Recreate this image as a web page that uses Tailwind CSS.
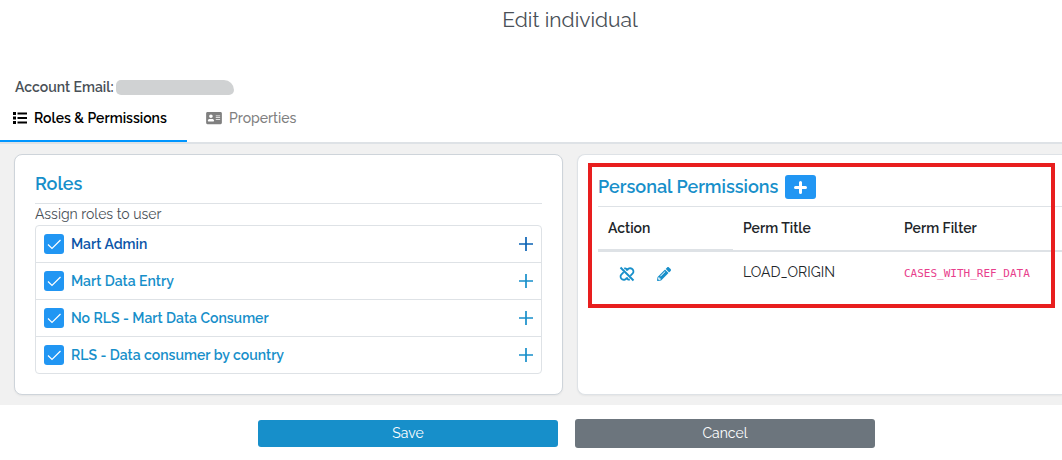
<!DOCTYPE html>
<html lang="en">
<head>
    <meta charset="UTF-8">
    <meta name="viewport" content="width=device-width, initial-scale=1.0">
    <title>Edit individual</title>
    <script src="https://cdn.jsdelivr.net/npm/@tailwindcss/browser@4"></script>
</head>
<body class="bg-white font-['Raleway','Lato',sans-serif] text-sm leading-5 text-[#495057]">
    <header class="h-[77px] pt-[6px] pl-[78px] text-center">
        <h1 class="text-[21px] leading-7 font-normal">Edit individual</h1>
    </header>

    <div class="flex items-center px-[15px] h-5 font-semibold">
        <span>Account Email:</span>
        <span class="ml-[2px] h-[15px] w-[118px] rounded-l-lg rounded-tr-2xl rounded-br-lg bg-[#d0d2d3]"></span>
    </div>

    <nav class="flex h-[47px] border-b-2 border-[#dee2e6]">
        <a href="#roles" class="flex w-[187px] items-center gap-[7px] border-b-2 border-[#0096ff] pl-[13px] pb-px font-semibold text-black">
            <svg class="h-[14px] w-[14px]" viewBox="0 0 14 14" fill="currentColor"><path d="M0 1h3v3H0zM0 5.500h3v3H0zM0 10h3v3H0zM4.500 1.500H14v2H4.500zM4.500 6H14v2H4.500zM4.500 10.500H14v2H4.500z"/></svg>
            Roles &amp; Permissions
        </a>
        <a href="#properties" class="flex items-center gap-[7px] px-[19px] pb-[3px] font-medium text-[#808080]">
            <svg class="h-[14px] w-4" viewBox="0 0 576 512" fill="currentColor"><path d="M528 32H48C21.500 32 0 53.500 0 80v352c0 26.500 21.500 48 48 48h480c26.500 0 48-21.500 48-48V80c0-26.500-21.500-48-48-48zM176 128c35.300 0 64 28.700 64 64s-28.700 64-64 64-64-28.700-64-64 28.700-64 64-64zm112 236.800c0 10.600-10 19.200-22.400 19.200H86.400C74 384 64 375.400 64 364.800v-19.200c0-31.800 30.100-57.600 67.200-57.600h89.600c37.100 0 67.200 25.800 67.200 57.600zM512 312c0 4.400-3.600 8-8 8H360c-4.400 0-8-3.600-8-8v-16c0-4.400 3.600-8 8-8h144c4.400 0 8 3.600 8 8zm0-64c0 4.400-3.600 8-8 8H360c-4.400 0-8-3.600-8-8v-16c0-4.400 3.600-8 8-8h144c4.400 0 8 3.600 8 8zm0-64c0 4.400-3.600 8-8 8H360c-4.400 0-8-3.600-8-8v-16c0-4.400 3.600-8 8-8h144c4.400 0 8 3.600 8 8z"/></svg>
            Properties
        </a>
    </nav>

    <main class="grid grid-cols-[549fr_485fr] gap-[14px] bg-[#f1f1f1] py-[10px] pl-[14px]">
        <!-- Roles -->
        <section id="roles" class="rounded-lg border border-[#ced4da] bg-white px-5 pt-[17px] pb-5 shadow-xs">
            <h2 class="border-b border-[#dee2e6] pb-[7px] text-lg leading-6 font-semibold text-[#178fca]">Roles</h2>
            <p class="h-[21px]">Assign roles to user</p>
            <ul class="divide-y divide-[#dee2e6] rounded-sm border border-[#dee2e6] font-semibold text-[#178fca]">
                <li class="flex h-[37px] items-center px-2">
                    <label class="flex flex-1 items-center gap-[7px] text-[#0b55a8]">
                        <span class="grid">
                            <input type="checkbox" checked class="col-start-1 row-start-1 h-5 w-5 appearance-none rounded-[3px] bg-[#2196f3]">
                            <svg class="pointer-events-none col-start-1 row-start-1 h-5 w-5" viewBox="0 0 20 20" fill="none" stroke="white" stroke-width="1.200"><path d="M4 10.500l4 4 8.500-8.500"/></svg>
                        </span>
                        Mart Admin
                    </label>
                    <button type="button" aria-label="Expand Mart Admin" class="text-[#0b63b5]"><svg class="h-[14px] w-[14px]" viewBox="0 0 14 14" fill="none" stroke="currentColor" stroke-width="1.700"><path d="M7 0v14M0 7h14"/></svg></button>
                </li>
                <li class="flex h-[37px] items-center px-2">
                    <label class="flex flex-1 items-center gap-[7px]">
                        <span class="grid">
                            <input type="checkbox" checked class="col-start-1 row-start-1 h-5 w-5 appearance-none rounded-[3px] bg-[#2196f3]">
                            <svg class="pointer-events-none col-start-1 row-start-1 h-5 w-5" viewBox="0 0 20 20" fill="none" stroke="white" stroke-width="1.200"><path d="M4 10.500l4 4 8.500-8.500"/></svg>
                        </span>
                        Mart Data Entry
                    </label>
                    <button type="button" aria-label="Expand Mart Data Entry"><svg class="h-[14px] w-[14px]" viewBox="0 0 14 14" fill="none" stroke="currentColor" stroke-width="1.700"><path d="M7 0v14M0 7h14"/></svg></button>
                </li>
                <li class="flex h-[37px] items-center px-2">
                    <label class="flex flex-1 items-center gap-[7px]">
                        <span class="grid">
                            <input type="checkbox" checked class="col-start-1 row-start-1 h-5 w-5 appearance-none rounded-[3px] bg-[#2196f3]">
                            <svg class="pointer-events-none col-start-1 row-start-1 h-5 w-5" viewBox="0 0 20 20" fill="none" stroke="white" stroke-width="1.200"><path d="M4 10.500l4 4 8.500-8.500"/></svg>
                        </span>
                        No RLS - Mart Data Consumer
                    </label>
                    <button type="button" aria-label="Expand No RLS - Mart Data Consumer"><svg class="h-[14px] w-[14px]" viewBox="0 0 14 14" fill="none" stroke="currentColor" stroke-width="1.700"><path d="M7 0v14M0 7h14"/></svg></button>
                </li>
                <li class="flex h-9 items-center px-2">
                    <label class="flex flex-1 items-center gap-[7px]">
                        <span class="grid">
                            <input type="checkbox" checked class="col-start-1 row-start-1 h-5 w-5 appearance-none rounded-[3px] bg-[#2196f3]">
                            <svg class="pointer-events-none col-start-1 row-start-1 h-5 w-5" viewBox="0 0 20 20" fill="none" stroke="white" stroke-width="1.200"><path d="M4 10.500l4 4 8.500-8.500"/></svg>
                        </span>
                        RLS - Data consumer by country
                    </label>
                    <button type="button" aria-label="Expand RLS - Data consumer by country"><svg class="h-[14px] w-[14px]" viewBox="0 0 14 14" fill="none" stroke="currentColor" stroke-width="1.700"><path d="M7 0v14M0 7h14"/></svg></button>
                </li>
            </ul>
        </section>

        <!-- Personal permissions -->
        <section class="relative rounded-l-lg border border-r-0 border-[#dee2e6] bg-white pt-5 pl-5 shadow-xs">
            <div class="flex h-8 items-start gap-[7px] border-b border-[#dee2e6]">
                <h2 class="text-lg leading-6 font-semibold text-[#178fca]">Personal Permissions</h2>
                <button type="button" aria-label="Add permission" class="flex h-6 w-[31px] items-center justify-center rounded-[3px] bg-[#2196f3] text-white">
                    <svg class="h-[13px] w-[13px]" viewBox="0 0 13 13" fill="none" stroke="currentColor" stroke-width="3" stroke-linecap="round"><path d="M6.500 1.500v10M1.500 6.500h10"/></svg>
                </button>
            </div>
            <table class="w-full table-fixed border-separate border-spacing-0 text-left text-[#212529]">
                <thead class="align-top">
                    <tr class="h-[45px]">
                        <th class="w-[135px] border-b-3 border-[#dee2e6] px-[10px] pt-[11px] font-semibold">Action</th>
                        <th class="w-[161px] border-b-2 border-[#dee2e6] px-[10px] pt-[11px] font-semibold">Perm Title</th>
                        <th class="border-b-2 border-[#dee2e6] px-[10px] pt-[11px] font-semibold">Perm Filter</th>
                    </tr>
                </thead>
                <tbody class="align-top">
                    <tr class="h-11">
                        <td class="px-[21px] pt-[14px] text-[#178fca]">
                            <div class="flex items-center gap-[22px]">
                                <button type="button" aria-label="Remove permission">
                                    <svg class="h-4 w-4" viewBox="0 0 16 16" fill="none" stroke="currentColor" stroke-width="1.900"><path d="M1.500 1.500l13 13"/><path d="M5.200 2.600C6.800 1.800 8 3 8 4.800M8.300 4.200C9 2.500 11 1.800 12.700 2.600c1.900 1 2.300 3.300 1 4.800l-2.400 2.400M10.800 13.400C9.200 14.200 8 13 8 11.200M7.700 11.800C7 13.500 5 14.200 3.300 13.400c-1.900-1-2.300-3.300-1-4.800l2.400-2.400" stroke-width="1.800"/></svg>
                                </button>
                                <button type="button" aria-label="Edit permission">
                                    <svg class="h-[14px] w-[14px]" viewBox="0 0 512 512" fill="currentColor"><path d="M497.900 142.100l-46.100 46.100c-4.700 4.700-12.300 4.700-17 0l-111-111c-4.700-4.700-4.700-12.300 0-17l46.100-46.100c18.700-18.700 49.100-18.700 67.900 0l60.100 60.100c18.800 18.700 18.800 49.100 0 67.900zM284.200 99.800L21.600 362.400.4 483.900c-2.900 16.400 11.400 30.600 27.800 27.800l121.500-21.300 262.600-262.600c4.700-4.700 4.700-12.300 0-17l-111-111c-4.800-4.700-12.400-4.700-17.100 0zM124.100 339.900c-5.500-5.500-5.500-14.300 0-19.800l154-154c5.500-5.500 14.300-5.500 19.800 0s5.500 14.300 0 19.800l-154 154c-5.500 5.500-14.300 5.500-19.800 0zM88 424h48v36.300l-64.500 11.300-31.100-31.100L51.700 376H88v48z"/></svg>
                                </button>
                            </div>
                        </td>
                        <td class="px-[10px] pt-[10px]">LOAD_ORIGIN</td>
                        <td class="px-[10px] pt-[10px]"><code class="font-['DejaVu_Sans_Mono',monospace] text-[11px] text-[#e83e8c]">CASES_WITH_REF_DATA</code></td>
                    </tr>
                </tbody>
            </table>
            <div class="pointer-events-none absolute top-[8px] right-[7px] left-[10px] h-[145px] border-4 border-[#e81e1e]"></div>
        </section>
    </main>

    <footer class="flex items-center justify-center gap-[17px] pt-[14px] pl-[71px] text-white">
        <button type="button" class="h-[27px] w-[300px] rounded-[3px] bg-[#178fca] pb-px">Save</button>
        <button type="button" class="h-[29px] w-[300px] rounded-[3px] bg-[#6c757d] pb-px">Cancel</button>
    </footer>
</body>
</html>
